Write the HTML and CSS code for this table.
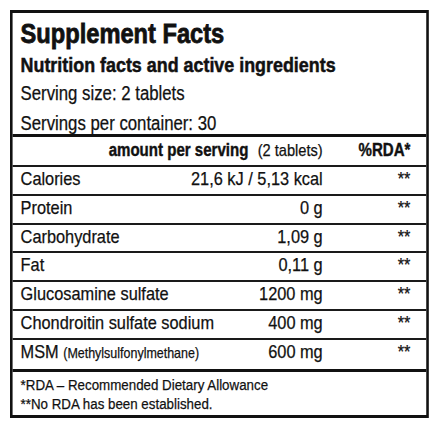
FILE: index.html
```html
<!DOCTYPE html>
<html>
	<head>
		<meta charset="UTF-8">
		<title>Supplement Facts</title>
		<link rel="stylesheet" href="styles.css">
	</head>
	<body>
		<div class="sheet">
			<div class="facts">
				<!-- top block -->
				<div class="head">
					<h1 class="title">Supplement Facts</h1>
					<h2 class="sub">Nutrition facts and active ingredients</h2>
					<p class="line">Serving size: 2 tablets</p>
					<p class="line last">Servings per container: 30</p>
				</div>

				<!-- table -->
				<div class="table">
					<div class="row thead">
						<div class="amount"><b>amount per serving</b> <span>(2 tablets)</span></div>
						<div class="rda"><b>%RDA*</b></div>
					</div>
					<div class="row">
						<div class="name">Calories</div>
						<div class="val">21,6 kJ / 5,13 kcal</div>
						<div class="rda">**</div>
					</div>
					<div class="row">
						<div class="name">Protein</div>
						<div class="val">0 g</div>
						<div class="rda">**</div>
					</div>
					<div class="row">
						<div class="name">Carbohydrate</div>
						<div class="val">1,09 g</div>
						<div class="rda">**</div>
					</div>
					<div class="row">
						<div class="name">Fat</div>
						<div class="val">0,11 g</div>
						<div class="rda">**</div>
					</div>
					<div class="row">
						<div class="name">Glucosamine sulfate</div>
						<div class="val">1200 mg</div>
						<div class="rda">**</div>
					</div>
					<div class="row">
						<div class="name">Chondroitin sulfate sodium</div>
						<div class="val">400 mg</div>
						<div class="rda">**</div>
					</div>
					<div class="row">
						<div class="name">MSM <small>(Methylsulfonylmethane)</small></div>
						<div class="val">600 mg</div>
						<div class="rda">**</div>
					</div>
				</div>

				<!-- footnotes -->
				<div class="foot">
					<p>*RDA – Recommended Dietary Allowance</p>
					<p>**No RDA has been established.</p>
				</div>
			</div>
		</div>
	</body>
</html>
```

FILE: styles.css
```css
*{
	margin: 0;
	padding: 0;
	box-sizing: border-box;
}
body{
	background: #fff;
	color: #111;
	font-family: "Liberation Sans", Arial, sans-serif;
	-webkit-text-stroke: 0.25px #111;
}
.sheet{
	width: 419px;
	margin: 10px;
	overflow: hidden;
}
/* the label font is a condensed grotesk: squeeze the whole panel */
.facts{
	width: 487px;
	border: 3px solid #111;
	border-left-width: 3.5px;
	border-right-width: 3.5px;
	transform: scaleX(0.86);
	transform-origin: 0 0;
}
.head{
	padding: 4.5px 18px 0 9.3px;
	border-bottom: 3px solid #111;
}
.title{
	font-size: 27.5px;
	line-height: 32px;
	font-weight: bold;
	-webkit-text-stroke: 0.8px #111;
}
.sub{
	font-size: 20.8px;
	line-height: 29px;
	font-weight: bold;
	-webkit-text-stroke: 0.5px #111;
}
.line{
	font-size: 19.5px;
	line-height: 29.5px;
}
.line.last{
	padding-top: 4px;
	line-height: 22px;
}
.row{
	display: grid;
	grid-template-columns: 1fr auto 102px;
	height: 28.8px;
	padding: 0 18.4px 0 9.3px;
	border-bottom: 2px solid #1a1a1a;
	font-size: 19px;
	line-height: 23px;
	white-space: nowrap;
}
.row:last-child{
	height: 29px;
	border-bottom: none;
}
.thead{
	grid-template-columns: 1fr 102px;
	height: 30px;
	font-size: 17.5px;
	line-height: 26px;
}
.thead b{
	-webkit-text-stroke: 0.4px #111;
}
.thead .amount{
	text-align: right;
}
.thead .amount span{
	margin-left: 6px;
	font-size: 17px;
}
.val{
	text-align: right;
}
.rda{
	text-align: right;
}
.name small{
	font-size: 14.5px;
}
.foot{
	border-top: 3px solid #111;
	padding: 3px 9.3px 2px;
	font-size: 15.5px;
	line-height: 19px;
}
```
